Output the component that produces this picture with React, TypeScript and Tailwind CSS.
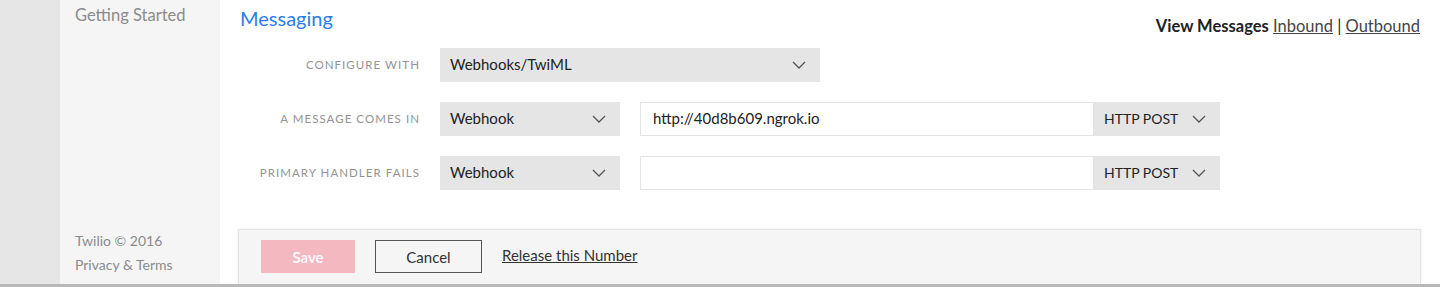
import React from "react";

const Chevron = () => (
  <svg width="14" height="8" viewBox="0 0 14 8" className="shrink-0">
    <polyline points="1,1 7,7 13,1" fill="none" stroke="#555" strokeWidth="1.3" />
  </svg>
);

const Select = ({ value, width }: { value: string; width: string }) => (
  <div className={`${width} h-[34px] bg-[#e5e5e5] flex items-center justify-between pl-[10px] pr-[14px] text-[15px] text-[#222]`}>
    <span>{value}</span>
    <Chevron />
  </div>
);

const Label = ({ text }: { text: string }) => (
  <div className="w-[200px] text-right text-[11.5px] tracking-[1.05px] uppercase text-[#939393]">
    {text}
  </div>
);

const UrlField = ({ value }: { value: string }) => (
  <div className="flex ml-[20px] h-[34px]">
    <div className="w-[454px] border border-[#e4e4e4] bg-white flex items-center pl-[12px] text-[15px] text-[#222]">
      {value}
    </div>
    <div className="w-[126px] bg-[#e5e5e5] flex items-center justify-between pl-[10px] pr-[14px] text-[14px] text-[#222]">
      <span>HTTP POST</span>
      <Chevron />
    </div>
  </div>
);

export default function App() {
  return (
    <div className="w-[1440px] h-[287px] overflow-hidden flex flex-col bg-white font-['Lato',sans-serif]">
      <div className="flex h-[284px]">
        <div className="w-[60px] bg-[#e6e6e6]" />
        <aside className="w-[160px] bg-[#f5f5f5] flex flex-col justify-between pl-[15px] pb-[7px]">
          <div className="pt-[4px] text-[16.5px] leading-[22px] text-[#8b8b8b]">Getting Started</div>
          <div className="text-[14px] leading-[24px] text-[#8b8b8b]">
            <div>Twilio © 2016</div>
            <div>Privacy &amp; Terms</div>
          </div>
        </aside>

        <main className="flex-1 flex flex-col">
          <div className="h-[48px] flex justify-between">
            <h1 className="pl-[20px] pt-[6px] text-[20px] leading-[24px] text-[#2b7de9]">Messaging</h1>
            <div className="pr-[20px] pt-[16px] text-[16.5px] leading-[20px] text-[#222]">
              <span className="font-bold">View Messages</span>{" "}
              <a className="underline text-[#444]">Inbound</a> |{" "}
              <a className="underline text-[#444]">Outbound</a>
            </div>
          </div>

          <div className="flex flex-col gap-[20px]">
            <div className="flex items-center gap-[20px]">
              <Label text="Configure with" />
              <Select value="Webhooks/TwiML" width="w-[380px]" />
            </div>
            <div className="flex items-center">
              <Label text="A message comes in" />
              <div className="ml-[20px]">
                <Select value="Webhook" width="w-[180px]" />
              </div>
              <UrlField value="http://40d8b609.ngrok.io" />
            </div>
            <div className="flex items-center">
              <Label text="Primary handler fails" />
              <div className="ml-[20px]">
                <Select value="Webhook" width="w-[180px]" />
              </div>
              <UrlField value="" />
            </div>
          </div>

          <div className="mt-[39px] ml-[18px] w-[1183px] h-[56px] bg-[#f5f5f5] border border-b-0 border-[#e4e4e4] shadow-[0_0_3px_rgba(0,0,0,0.08)] flex items-center pl-[22px] gap-[20px]">
            <button className="w-[94px] h-[33px] bg-[#f4b9c0] text-white text-[15px] font-semibold">Save</button>
            <button className="w-[107px] h-[33px] border border-[#555] text-[15px] text-[#333]">Cancel</button>
            <a className="underline text-[15px] text-[#333] -mt-[4px]">Release this Number</a>
          </div>
        </main>
      </div>
      <div className="h-[3px] bg-[#b8b8b8]" />
    </div>
  );
}
